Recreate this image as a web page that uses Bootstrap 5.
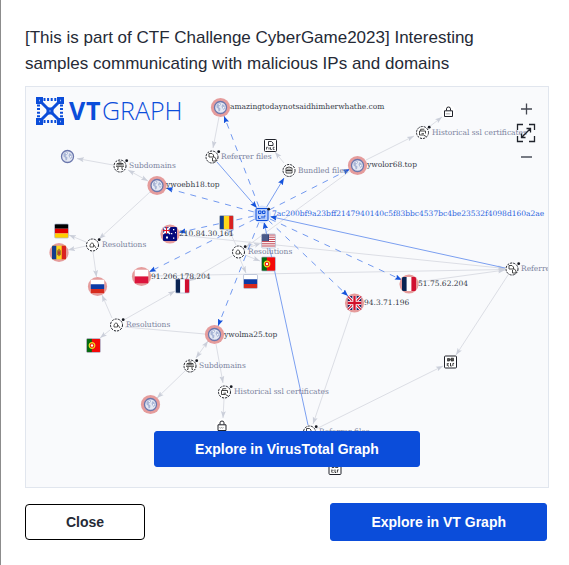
<!DOCTYPE html>
<html lang="en">
<head>
<meta charset="utf-8">
<meta name="viewport" content="width=device-width, initial-scale=1">
<title>VT Graph</title>
<link rel="stylesheet" href="https://cdn.jsdelivr.net/npm/bootstrap@5.3.0/dist/css/bootstrap.min.css">
<style>
  body { font-family: "Liberation Sans", Arial, sans-serif; color: #252a36; background: #fff; }
  .dialog-pane { border-left: 1px solid #8c8c8c; padding: 25px 20px 24px 24px; }
  .dialog-title { font-size: 17px; line-height: 26px; font-weight: 400; margin-bottom: 9px; padding-right: 24px; }
  .graph-panel { background: #f9fafc; border: 1px solid #e1e6ee; margin-bottom: 15px; }
  .dialog-actions { padding-right: 2px; }
  .vt-btn { --bs-btn-bg: #0b4dda; --bs-btn-border-color: #0b4dda; --bs-btn-color: #fff;
    --bs-btn-hover-bg: #093eb0; --bs-btn-hover-color: #fff; --bs-btn-border-radius: 3px;
    --bs-btn-font-weight: 700; --bs-btn-font-size: 14px; --bs-btn-line-height: 24px;
    --bs-btn-padding-x: 40px; --bs-btn-padding-y: 5px; }
  .vt-main { --bs-btn-padding-y: 6px; }
  .vt-close { --bs-btn-bg: #fff; --bs-btn-border-color: #000; --bs-btn-color: #252a36; --bs-btn-border-radius: 4px; }
  .overlay-action { bottom: 20px; }
  .zoom-tools { top: 10px; right: 10px; }
  .zoom-tools button { width: 24px; height: 24px; }
  .graph-svg { font-family: "DejaVu Serif", serif; font-size: 15px; }
  .edge { stroke: #dcdee5; fill: none; marker-end: url(#headGrey); }
  .edge-two { marker-start: url(#headGrey); }
  .edge-plain { marker-end: none; }
  .edge-blue { stroke: #7b9ff0; marker-end: url(#headBlue); }
  .edge-dash { stroke: #7299f0; stroke-dasharray: 6 6; marker-end: url(#headBlue); }
  .name-label { fill: #363a48; }
  .kind-label { fill: #7c849e; }
  .hash-label { fill: #2f66de; }
  .logo-text { font-family: "Open Sans", sans-serif; font-size: 25px; fill: #0b4dda; }
</style>
<script src="https://cdn.jsdelivr.net/npm/bootstrap@5.3.0/dist/js/bootstrap.bundle.min.js"></script>
</head>
<body>
<main class="dialog-pane min-vh-100">
  <h1 class="dialog-title">[This is part of CTF Challenge CyberGame2023] Interesting samples communicating with malicious IPs and domains</h1>

  <section class="graph-panel position-relative" aria-label="Graph preview">
    <svg class="graph-svg d-block w-100" viewBox="52 174 1044 800" role="img" aria-label="Relationship graph">
      <defs>
        <marker id="headGrey" markerUnits="userSpaceOnUse" markerWidth="8" markerHeight="6" refX="7" refY="3" orient="auto-start-reverse"><path d="M0 .5L7 3L0 5.5L1.5 3z" fill="#cbcfda"/></marker>
        <marker id="headBlue" markerUnits="userSpaceOnUse" markerWidth="8" markerHeight="6" refX="7" refY="3" orient="auto"><path d="M0 .3L7 3L0 5.7L1.2 3z" fill="#1553dc"/></marker>
        <g id="globe">
          <circle r="6" fill="#e4e8f3" stroke="#6b77ad" stroke-width="1.3"/>
          <path d="M-4-2.5Q-2.5-4.8 0-4.5L.5-3L-1-1.5L-2-.5L0 1L-.5 3.5L-2 4L-2.3 1.2L-4 0zM2-3.5L4-2L4.5 1L3 2.6L2 .8L1-.8z" fill="#a8b5d6"/>
          <path d="M-2-4L-.2-3.6L-1.5-2zM2.2-1L4 0L3 1.6z" fill="#fff"/>
        </g>
        <circle id="halo" r="9.6" fill="#e59c9c"/>
        <g id="badGlobe"><use href="#halo"/><use href="#globe"/></g>
        <g id="ring"><circle r="6" fill="#fff" stroke="#20222a" stroke-dasharray="2.2 1"/></g>
        <circle id="dot" cx="6.7" cy="-5.3" r="1.4" fill="#181a22"/>
        <g id="res"><use href="#ring"/><use href="#dot"/><path d="M-2.5 2V0L-.8-2.2L1-1.2V2M-2.5 2H1M1.5 0L3.5 3" fill="none" stroke="#333" stroke-width=".8"/></g>
        <g id="sub"><use href="#ring"/><use href="#dot"/><path d="M-3-.5V-2.5H3V-.5M-4 .3H4M-2 1V3.5H-3M2 1V3.5H3M-1.5-4H1.5M-2-1.2H2" fill="none" stroke="#333" stroke-width=".9"/></g>
        <g id="ref"><use href="#ring"/><use href="#dot"/><path d="M-3 0V-3.5H0L1.5-2V0M-1 0H2.5L4 2V4H.5V1M-3 0H-1" fill="none" stroke="#333" stroke-width=".9"/></g>
        <g id="ssl"><use href="#ring"/><use href="#dot"/><path d="M-3 2.5V-1.5H3V1M-1.8-1.5V-3.3H1.8M-1 1.2H1.5M-3 2.5H1L3.5 4" fill="none" stroke="#333" stroke-width=".9"/></g>
        <g id="lock"><circle r="7" fill="#fff"/><path d="M-4-1.2H4V4.5H-4zM-2-1.5V-3.2Q-2-5 0-5T2-3.2V-1.5" fill="none" stroke="#20222a"/><path d="M-2.5 1.2L-1.5 2.4L-.5 1.2L.5 2.4L1.5 1.2" fill="none" stroke="#888" stroke-width=".7"/></g>
        <g id="box"><rect x="-6" y="-6" width="12" height="12" rx="1" fill="#fff" stroke="#20222a"/></g>
        <g id="elf"><use href="#box"/><path d="M-3-3.5H-1V-1H-3zM.5-3.8H3V-1H.5zM-1-2.5H.5" fill="#555" stroke="#222" stroke-width=".7"/><path d="M-3.2 1V4M-3-.1V0M-2.5 4H-1.5M-2.5 1.8H-1.5M0 1V4H1.2M2.4 4V1.4H3.6" fill="none" stroke="#222" stroke-width=".9"/></g>
        <clipPath id="fc"><rect x="-7" y="-7" width="14" height="14" rx="1.2"/></clipPath>
        <rect id="frame" x="-7" y="-7" width="14" height="14" rx="1.2" fill="none" stroke="#aab6cf" stroke-width=".7"/>
        <g id="ru" clip-path="url(#fc)"><rect x="-7" y="-7" width="14" height="14" fill="#fff"/><path d="M-7-2.3H7V2.4H-7z" fill="#0c3ba5"/><path d="M-7 2.4H7V7H-7z" fill="#d72b1e"/></g>
        <g id="fr" clip-path="url(#fc)"><rect x="-7" y="-7" width="14" height="14" fill="#fff"/><path d="M-7-7H-2.4V7H-7z" fill="#0b2453"/><path d="M2.4-7H7V7H2.4z" fill="#d01030"/></g>
        <g id="ro" clip-path="url(#fc)"><rect x="-7" y="-7" width="14" height="14" fill="#ffd81a"/><path d="M-7-7H-2.7V7H-7z" fill="#123d8c"/><path d="M2.7-7H7V7H2.7z" fill="#d9221f"/></g>
        <g id="pt" clip-path="url(#fc)"><rect x="-7" y="-7" width="14" height="14" fill="#f40808"/><path d="M-7-7H-1.7V7H-7z" fill="#056b10"/><circle cx="-1.5" r="2.8" fill="#f40808" stroke="#e8df22" stroke-width="1.2"/><circle cx="-1.5" r="1.2" fill="#fff"/></g>
        <g id="cross"><path d="M-7-7L7 7M7-7L-7 7" stroke="#fff" stroke-width="3"/><path d="M-7-7L7 7M7-7L-7 7" stroke="#d1102b" stroke-width="1.1"/><path d="M0-7V7M-7 0H7" stroke="#fff" stroke-width="4.2"/><path d="M0-7V7M-7 0H7" stroke="#d1102b" stroke-width="2.3"/></g>
      </defs>

      <g transform="scale(2)">
      <!-- logo -->
      <g stroke="#0b4dda" fill="none">
        <path d="M39 100L61 122M61 100L39 122" stroke-width="3"/>
        <path d="M43.5 99.5H57M43.5 121.5H57M38.5 104.5V118M61.5 104.5V118" stroke-width="3" stroke-dasharray="2 1.6"/>
        <path d="M36 97h7v7h-7zM57 97h7v7h-7zM36 118h7v7h-7zM57 118h7v7h-7zM46.500 107.500h7v7h-7z" fill="#0b4dda" stroke="none"/>
        <path d="M39 100.500h1M60 100.500h1M39 121.500h1M60 121.500h1M49.500 111h1" stroke="#a9c1f5" stroke-width="1.500"/>
      </g>
      <text class="logo-text" x="69 86" y="120" font-weight="700">VT</text>
      <text class="logo-text" x="102" y="120" font-weight="300">GRAPH</text>

      <!-- edges -->
      <g class="edge">
        <path d="M113 165L77 158.500"/><path class="edge-two" d="M148 181L128 170"/>
        <path d="M150 192L99 239"/><path d="M219 117L213 148"/><path d="M284 163L275 152"/>
        <path d="M366 160L414 136"/><path d="M429 127L442 117"/>
        <path d="M350 171L246 247"/><path d="M86 242L69 235"/><path d="M86 246L68 250"/><path d="M93 252L96.500 277"/>
        <path d="M112 318L102 295"/><path d="M122 321L175 291"/><path d="M110 330L100 338"/>
        <path class="edge-plain" d="M205 334L125 327"/><path class="edge-two" d="M208 341L196 358"/>
        <path d="M185 371L157 398"/><path d="M216 344L223 383"/><path d="M224 399L223 418"/>
        <path d="M236 245L229 230"/><path d="M245 249L261 243"/><path d="M245 255L260 261"/><path d="M240 259L246 273"/>
        <path d="M232 256L189 281"/><path d="M179 235L505 268.500"/><path d="M150 276L505 269.500"/><path d="M418 282L505 270"/>
        <path d="M351 312L313 424"/><path d="M508 275L456 355"/><path d="M316 429L443 366"/><path d="M312 438L332 463"/>
      </g>
      <path class="edge-blue" d="M217 162L257 208"/><path class="edge-blue" d="M266 208L284 178"/>
      <path class="edge-blue" d="M505 268L270 216.500"/><path class="edge-blue" d="M308 425L264 222"/>
      <g class="edge-dash">
        <path d="M259 207L224 116"/><path d="M269 210L350 169"/><path d="M254 212L166 188"/>
        <path d="M254 216L179 232.500"/><path d="M255 219L149 272"/><path d="M259 222L218 326"/>
        <path d="M268 220L348 296"/><path d="M270 219L402 280"/>
      </g>

      <!-- nodes -->
      <use href="#globe" x="67.500" y="156.500"/>
      <use href="#badGlobe" x="220.500" y="107.500"/><use href="#badGlobe" x="357.500" y="165.500"/><use href="#badGlobe" x="157" y="185.500"/>
      <use href="#badGlobe" x="214.500" y="334.500"/><use href="#badGlobe" x="150.500" y="404.500"/>
      <use href="#sub" x="120" y="166"/><use href="#sub" x="190" y="366"/>
      <use href="#ref" x="212" y="157"/><use href="#ref" x="512" y="269"/><use href="#ref" x="309.500" y="432"/>
      <g transform="translate(289 170.500)"><use href="#ring"/><path d="M-3-2.500L0-3.500L3-2.500V2.500H-3zM-3 0H3M-1-2V1M1-2V1" fill="none" stroke="#333" stroke-width=".9"/></g>
      <use href="#ssl" x="422.500" y="132.500"/><use href="#ssl" x="224.500" y="392"/>
      <use href="#res" x="92.500" y="245"/><use href="#res" x="238.500" y="252"/><use href="#res" x="116.500" y="325"/>
      <use href="#lock" x="448.500" y="112"/><use href="#lock" x="222" y="426"/>
      <g transform="translate(270.500 145.500)"><use href="#box"/><path d="M-2-4H1L2.500-2.500V0H-2z" fill="none" stroke="#20222a" stroke-width=".9"/><path d="M-4 4V1.800H-2.700M-1.500 1.800V4M0 1.800V4H1.300M4 1.800H2.700V4H4" fill="none" stroke="#20222a" stroke-width=".8"/></g>
      <use href="#elf" x="450.500" y="362"/><use href="#elf" x="335" y="468.500"/>
      <g transform="translate(262 214.500)"><circle r="9" fill="#d5e1fb"/><rect x="-6" y="-6" width="12" height="12" rx="1" fill="#b9cefa" stroke="#0b4dda"/><path d="M-3.500-3.500H-1V-1H-3.500zM.5-3.500H3V-1H.5zM-3.500 1.500V4H-1.500M0 4V1.500M2 4V1.500H3.500" fill="none" stroke="#0b4dda"/><use href="#dot"/></g>

      <!-- flags -->
      <use href="#halo" x="59" y="252.500"/><g transform="translate(59 252.500)"><use href="#ro"/><path d="M-2-2L0-4L2-2V2L0 4L-2 2z" fill="#a67c28"/><path d="M-1-1H1V2H-1z" fill="#b83b30"/></g>
      <use href="#halo" x="97.500" y="286.500"/><use href="#ru" x="97.500" y="286.500"/>
      <use href="#halo" x="409" y="284"/><use href="#fr" x="409" y="284"/>
      <g transform="translate(141.500 276.500)"><use href="#halo"/><g clip-path="url(#fc)"><path d="M-7-7H7V0H-7z" fill="#fff"/><path d="M-7 0H7V7H-7z" fill="#dc143c"/></g></g>
      <g transform="translate(170 234)"><use href="#halo"/><g clip-path="url(#fc)"><rect x="-7" y="-7" width="14" height="14" fill="#050a7c"/><path d="M-7-7L0 0M0-7L-7 0M-3.500-7V0M-7-3.500H0" stroke="#fff" stroke-width="1.500"/><path d="M-3.500-7V0M-7-3.500H0" stroke="#e01527"/><path d="M-4 2.500h2v2h-2zM3-5h1.300v1.300H3zM1-1h1.300v1.300H1zM5-2h1v1.300H5zM3 3.500h1.300v1.300H3z" fill="#fff"/></g></g>
      <g transform="translate(354.500 303)"><use href="#halo"/><g clip-path="url(#fc)"><rect x="-7" y="-7" width="14" height="14" fill="#162164"/><use href="#cross"/></g></g>
      <g transform="translate(61.500 231)"><g clip-path="url(#fc)"><path d="M-7-7H7V-2.300H-7z" fill="#000"/><path d="M-7-2.300H7V2.400H-7z" fill="#e00000"/><path d="M-7 2.400H7V7H-7z" fill="#ffce00"/></g><use href="#frame"/></g>
      <use href="#ro" x="226.500" y="222.500"/><use href="#frame" x="226.500" y="222.500"/>
      <g transform="translate(268.500 241)"><g clip-path="url(#fc)"><rect x="-7" y="-7" width="14" height="14" fill="#fff"/><path d="M-7-6H7M-7-3.800H7M-7-1.600H7M-7 .600H7M-7 2.800H7M-7 5H7" stroke="#bd3c4c"/><path d="M-7-7H.5V0H-7z" fill="#344478"/><path d="M-6-5H0M-6-3H0M-6-1H0" stroke="#a9b2d0" stroke-width=".8" stroke-dasharray="1 1"/></g><use href="#frame"/></g>
      <use href="#pt" x="268.500" y="264"/><use href="#frame" x="268.500" y="264"/>
      <use href="#ru" x="250.500" y="281.500"/><use href="#frame" x="250.500" y="281.500"/>
      <use href="#fr" x="182.500" y="286"/><use href="#frame" x="182.500" y="286"/>
      <use href="#pt" x="93.500" y="345.500"/><use href="#frame" x="93.500" y="345.500"/>
      </g>

      <!-- labels -->
      <g class="name-label">
        <text x="460" y="218">amazingtodaynotsaidhimherwhathe.com</text>
        <text x="734" y="334">ywolor68.top</text>
        <text x="332" y="374">ywoebh18.top</text>
        <text x="358" y="472">210.84.30.161</text>
        <text x="302" y="558">91.206.178.204</text>
        <text x="728" y="610">94.3.71.196</text>
        <text x="836" y="572">51.75.62.204</text>
        <text x="448" y="674">ywolma25.top</text>
      </g>
      <g class="kind-label">
        <text x="258" y="336">Subdomains</text>
        <text x="442" y="318">Referrer files</text>
        <text x="596" y="346">Bundled files</text>
        <text x="864" y="270">Historical ssl certificates</text>
        <text x="204" y="494">Resolutions</text>
        <text x="496" y="508">Resolutions</text>
        <text x="1042" y="542">Referrer files</text>
        <text x="252" y="654">Resolutions</text>
        <text x="398" y="736">Subdomains</text>
        <text x="468" y="788">Historical ssl certificates</text>
        <text x="638" y="868">Referrer files</text>
      </g>
      <text class="hash-label" x="544" y="432">7ac200bf9a23bff2147940140c5f83bbc4537bc4be23532f4098d160a2ae</text>
    </svg>

    <div class="zoom-tools position-absolute d-flex flex-column">
      <button type="button" class="btn border-0 p-0 d-flex" aria-label="Zoom in"><svg width="24" height="24"><path d="M7 12H18M12.500 6.500V17.500" stroke="#444851" stroke-width="1.300"/></svg></button>
      <button type="button" class="btn border-0 p-0 d-flex" aria-label="Fit to screen"><svg width="24" height="24"><path d="M3.500 9V3.500H9M15 3.500H20.500V9M20.500 15V20.500H15M9 20.500H3.500V15M8 16L16 8M12.500 7.500H16.500V11.500M7.500 12.500V16.500H11.500" fill="none" stroke="#20242c" stroke-width="1.300"/></svg></button>
      <button type="button" class="btn border-0 p-0 d-flex" aria-label="Zoom out"><svg width="24" height="24"><path d="M7 12H18" stroke="#777b84" stroke-width="2"/></svg></button>
    </div>

    <div class="overlay-action position-absolute start-0 end-0 d-flex justify-content-center">
      <button type="button" class="btn vt-btn">Explore in VirusTotal Graph</button>
    </div>
  </section>

  <div class="dialog-actions d-flex justify-content-between align-items-center">
    <button type="button" class="btn vt-btn vt-close">Close</button>
    <button type="button" class="btn vt-btn vt-main">Explore in VT Graph</button>
  </div>
</main>
</body>
</html>
